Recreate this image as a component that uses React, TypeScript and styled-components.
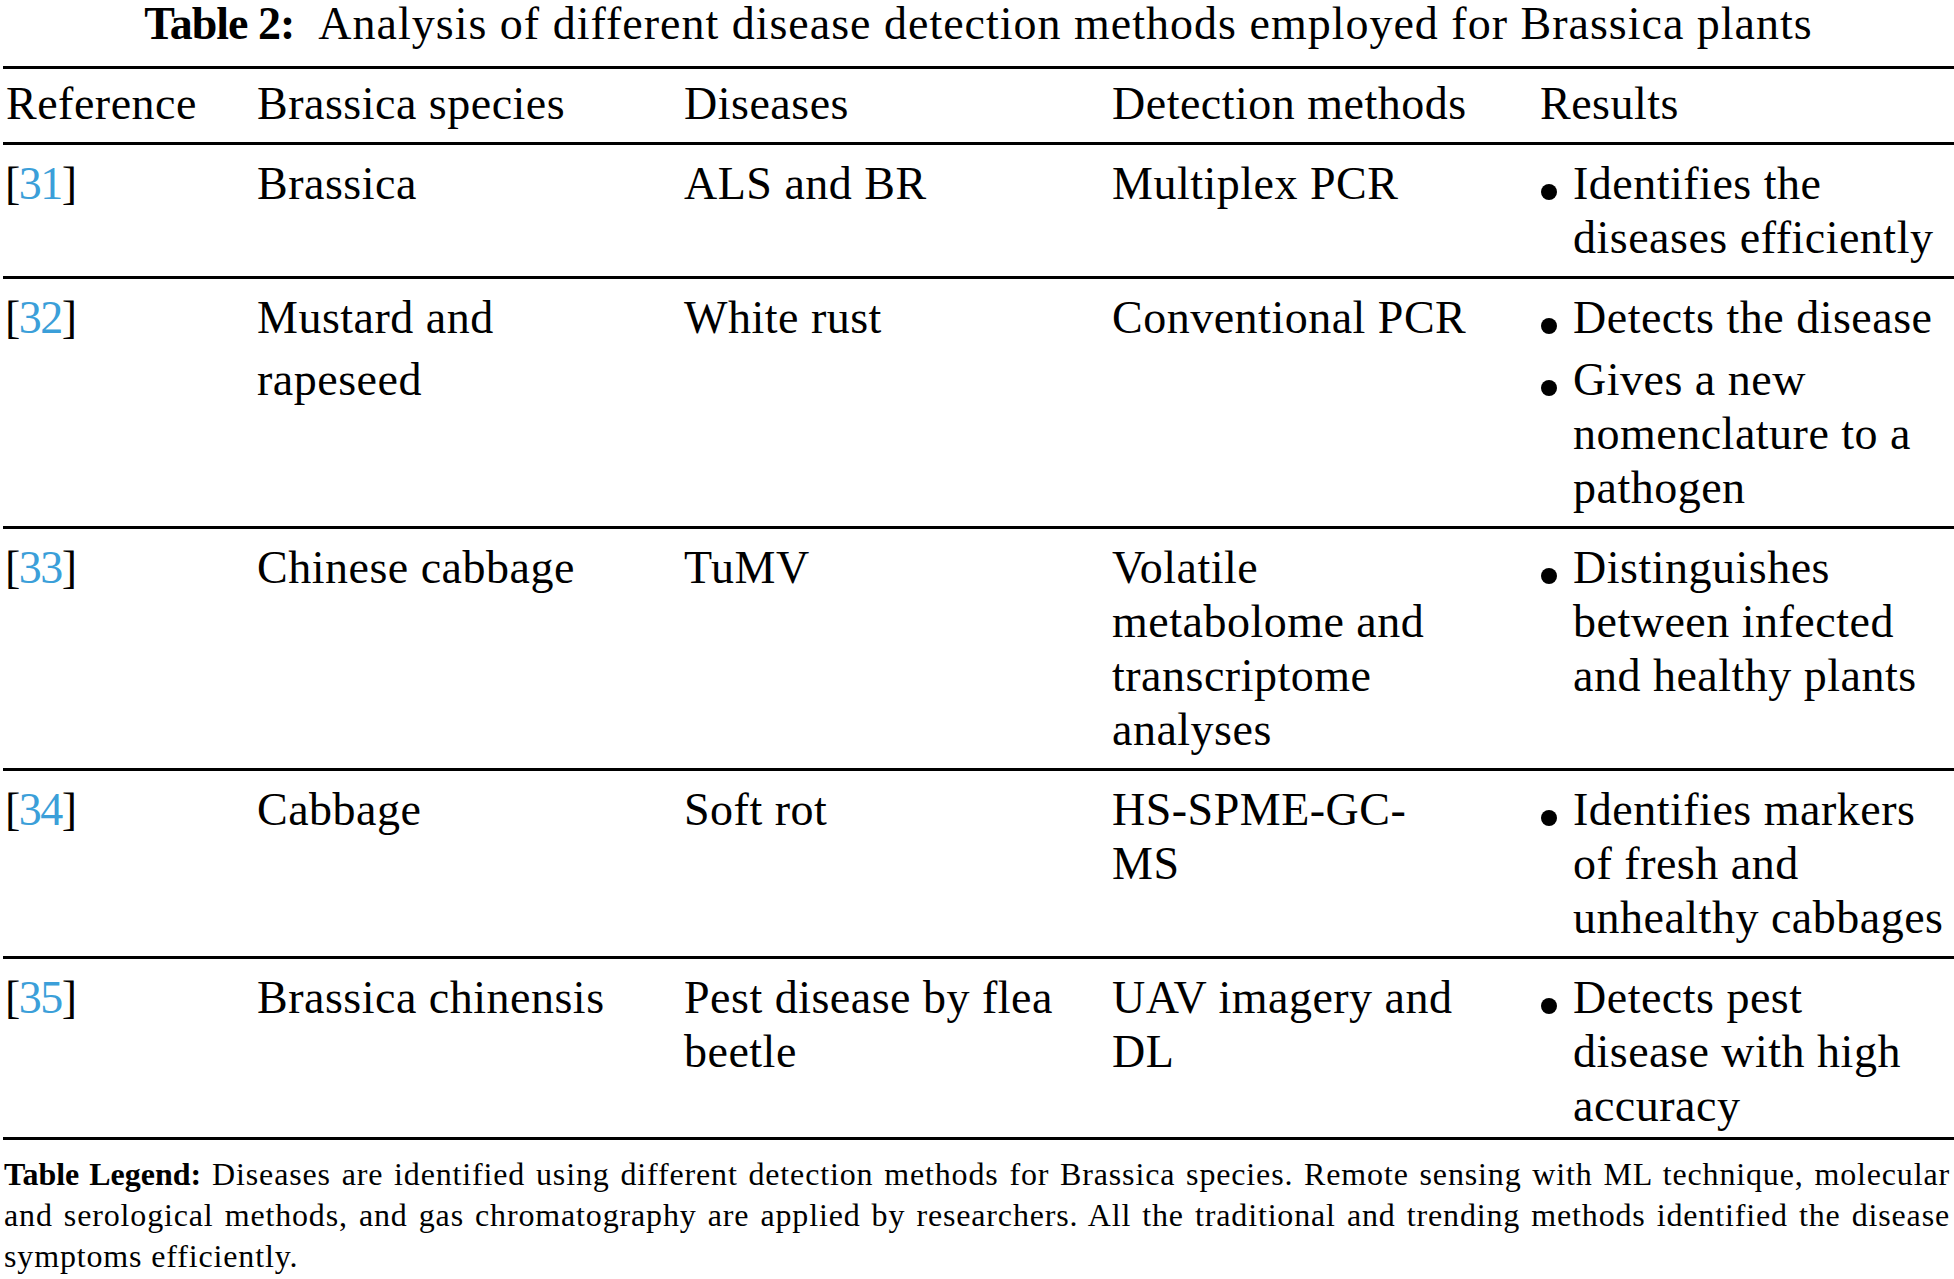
import React from 'react';
import styled, { createGlobalStyle } from 'styled-components';

const GlobalStyle = createGlobalStyle`
  html, body { margin: 0; padding: 0; background: #ffffff; }
  body {
    font-family: "Liberation Serif", "Times New Roman", serif;
    color: #000000;
  }
`;

const Page = styled.div`
  width: 1954px;
  box-sizing: border-box;
  padding-left: 3px;
`;

const Title = styled.h2`
  margin: 0 0 19px 0;
  font-size: 46px;
  line-height: 47px;
  font-weight: normal;
  text-align: center;
  letter-spacing: 1px;
  white-space: nowrap;
`;

const TitleLabel = styled.b`
  font-weight: bold;
  letter-spacing: -1px;
  margin-right: 24px;
`;

const Table = styled.div`
  border-top: 3px solid #000;
  font-size: 46px;
  line-height: 54px;
  letter-spacing: 0.5px;
`;

const Row = styled.div<{ $head?: boolean; $last?: boolean }>`
  display: grid;
  grid-template-columns: 251px 427px 428px 428px 1fr;
  padding: ${(p) => (p.$head ? '8px 0 11px' : p.$last ? '12px 0 4px' : '12px 0 11px')};
  border-bottom: 3px solid #000;
`;

const Cell = styled.div<{ $padRight?: number }>`
  padding-left: 3px;
  padding-right: ${(p) => p.$padRight ?? 8}px;
  min-width: 0;
`;

const RefCell = styled(Cell)`
  padding-left: 2px;
  letter-spacing: -1.5px;
`;

const Bracket = styled.span`
  color: #000;
`;

const RefNum = styled.span`
  color: #3b9fd9;
`;

const Lines = styled.div`
  display: flex;
  flex-direction: column;
  gap: 8px;
`;

const BulletList = styled.ul`
  list-style: none;
  margin: 0;
  padding: 0;
  display: flex;
  flex-direction: column;
  gap: 8px;
`;

const BulletItem = styled.li`
  display: flex;
  align-items: flex-start;
`;

const Bullet = styled.span`
  flex: 0 0 33px;
  display: block;
  &::before {
    content: '';
    display: block;
    width: 16px;
    height: 16px;
    margin: 27px 0 0 1px;
    border-radius: 50%;
    background: #000;
  }
`;

const BulletText = styled.span`
  flex: 1 1 auto;
  min-width: 0;
`;

const Legend = styled.p`
  margin: 0;
  padding: 14px 4px 0 1px;
  font-size: 32px;
  line-height: 41px;
  text-align: justify;
  letter-spacing: 0.85px;
`;

const LegendLabel = styled.b`
  font-weight: bold;
  letter-spacing: 0;
`;

type RowData = {
  ref: string;
  species: string[];
  disease: string;
  method: string;
  results: string[];
};

const rows: RowData[] = [
  {
    ref: '31',
    species: ['Brassica'],
    disease: 'ALS and BR',
    method: 'Multiplex PCR',
    results: ['Identifies the diseases efficiently'],
  },
  {
    ref: '32',
    species: ['Mustard and', 'rapeseed'],
    disease: 'White rust',
    method: 'Conventional PCR',
    results: ['Detects the disease', 'Gives a new nomenclature to a pathogen'],
  },
  {
    ref: '33',
    species: ['Chinese cabbage'],
    disease: 'TuMV',
    method: 'Volatile metabolome and transcriptome analyses',
    results: ['Distinguishes between infected and healthy plants'],
  },
  {
    ref: '34',
    species: ['Cabbage'],
    disease: 'Soft rot',
    method: 'HS-SPME-GC-MS',
    results: ['Identifies markers of fresh and unhealthy cabbages'],
  },
  {
    ref: '35',
    species: ['Brassica chinensis'],
    disease: 'Pest disease by flea beetle',
    method: 'UAV imagery and DL',
    results: ['Detects pest disease with high accuracy'],
  },
];

export default function App() {
  return (
    <>
      <GlobalStyle />
      <Page>
        <Title>
          <TitleLabel>Table 2:</TitleLabel>Analysis of different disease detection methods employed for Brassica plants
        </Title>
        <Table>
          <Row $head>
            <Cell>Reference</Cell>
            <Cell>Brassica species</Cell>
            <Cell>Diseases</Cell>
            <Cell $padRight={20}>Detection methods</Cell>
            <Cell>Results</Cell>
          </Row>
          {rows.map((r, i) => (
            <Row key={r.ref} $last={i === rows.length - 1}>
              <RefCell>
                <Bracket>[</Bracket>
                <RefNum>{r.ref}</RefNum>
                <Bracket>]</Bracket>
              </RefCell>
              <Cell>
                <Lines>
                  {r.species.map((s) => (
                    <div key={s}>{s}</div>
                  ))}
                </Lines>
              </Cell>
              <Cell>{r.disease}</Cell>
              <Cell $padRight={67}>{r.method}</Cell>
              <Cell $padRight={7}>
                <BulletList>
                  {r.results.map((t) => (
                    <BulletItem key={t}>
                      <Bullet />
                      <BulletText>{t}</BulletText>
                    </BulletItem>
                  ))}
                </BulletList>
              </Cell>
            </Row>
          ))}
        </Table>
        <Legend>
          <LegendLabel>Table Legend:</LegendLabel> Diseases are identified using different detection methods for Brassica species. Remote sensing with ML technique, molecular and serological methods, and gas chromatography are applied by researchers. All the traditional and trending methods identified the disease symptoms efficiently.
        </Legend>
      </Page>
    </>
  );
}
